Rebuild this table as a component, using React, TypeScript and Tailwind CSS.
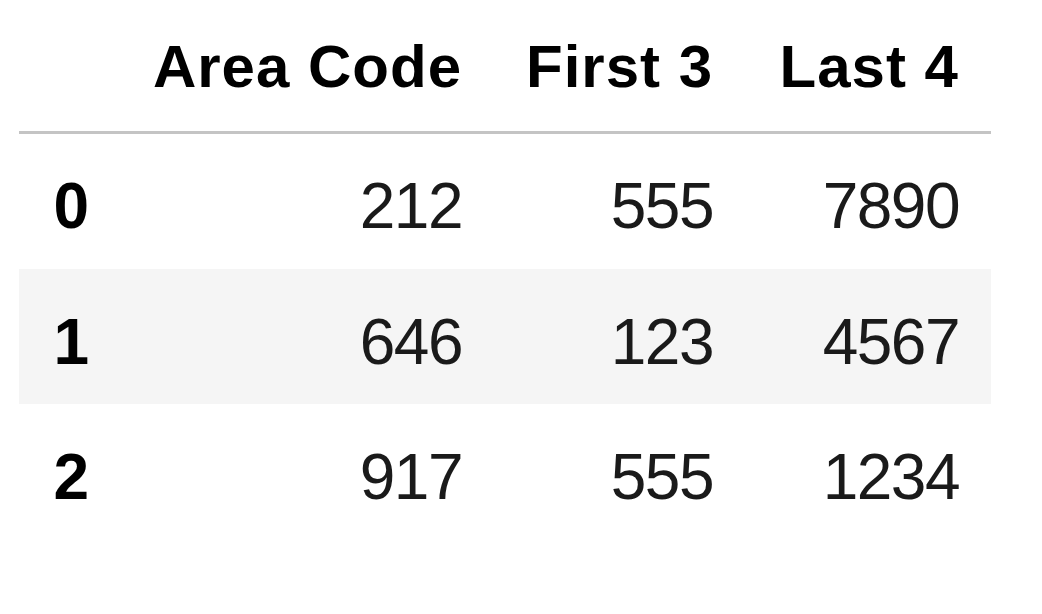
const columns = [
  { key: "area", label: "Area Code", width: "w-[374px]" },
  { key: "first", label: "First 3", width: "w-[251px]" },
  { key: "last", label: "Last 4", width: "w-[246px]" },
];

const rows = [
  { idx: 0, area: "212", first: "555", last: "7890" },
  { idx: 1, area: "646", first: "123", last: "4567" },
  { idx: 2, area: "917", first: "555", last: "1234" },
];

export default function App() {
  return (
    <div className="w-[1042px] h-[614px] bg-white font-['Liberation_Sans',Arial,sans-serif] text-[#1a1a1a]">
      <table className="ml-[19px] border-collapse table-fixed w-[972px]">
        <thead>
          <tr className="border-b-[3px] border-[#c4c4c4]">
            <th className="w-[101px] h-[132px]" />
            {columns.map((c) => (
              <th
                key={c.key}
                className={`${c.width} h-[132px] pt-[4px] px-[32px] text-right align-middle whitespace-nowrap text-[60px] leading-none font-bold tracking-[1px] text-black`}
              >
                {c.label}
              </th>
            ))}
          </tr>
        </thead>
        <tbody>
          {rows.map((r) => (
            <tr key={r.idx} className={r.idx % 2 === 1 ? "bg-[#f5f5f5]" : "bg-white"}>
              <th
                className={`${r.idx === 0 ? "h-[137px]" : "h-[135px]"} pt-[10px] pr-[32px] text-right align-middle whitespace-nowrap text-[64px] leading-none font-bold tracking-[-1px] text-black`}
              >
                {r.idx}
              </th>
              <td className="pt-[10px] px-[32px] text-right align-middle whitespace-nowrap text-[64px] leading-none tracking-[-1.5px]">{r.area}</td>
              <td className="pt-[10px] px-[32px] text-right align-middle whitespace-nowrap text-[64px] leading-none tracking-[-1.5px]">{r.first}</td>
              <td className="pt-[10px] px-[32px] text-right align-middle whitespace-nowrap text-[64px] leading-none tracking-[-1.5px]">{r.last}</td>
            </tr>
          ))}
        </tbody>
      </table>
    </div>
  );
}
